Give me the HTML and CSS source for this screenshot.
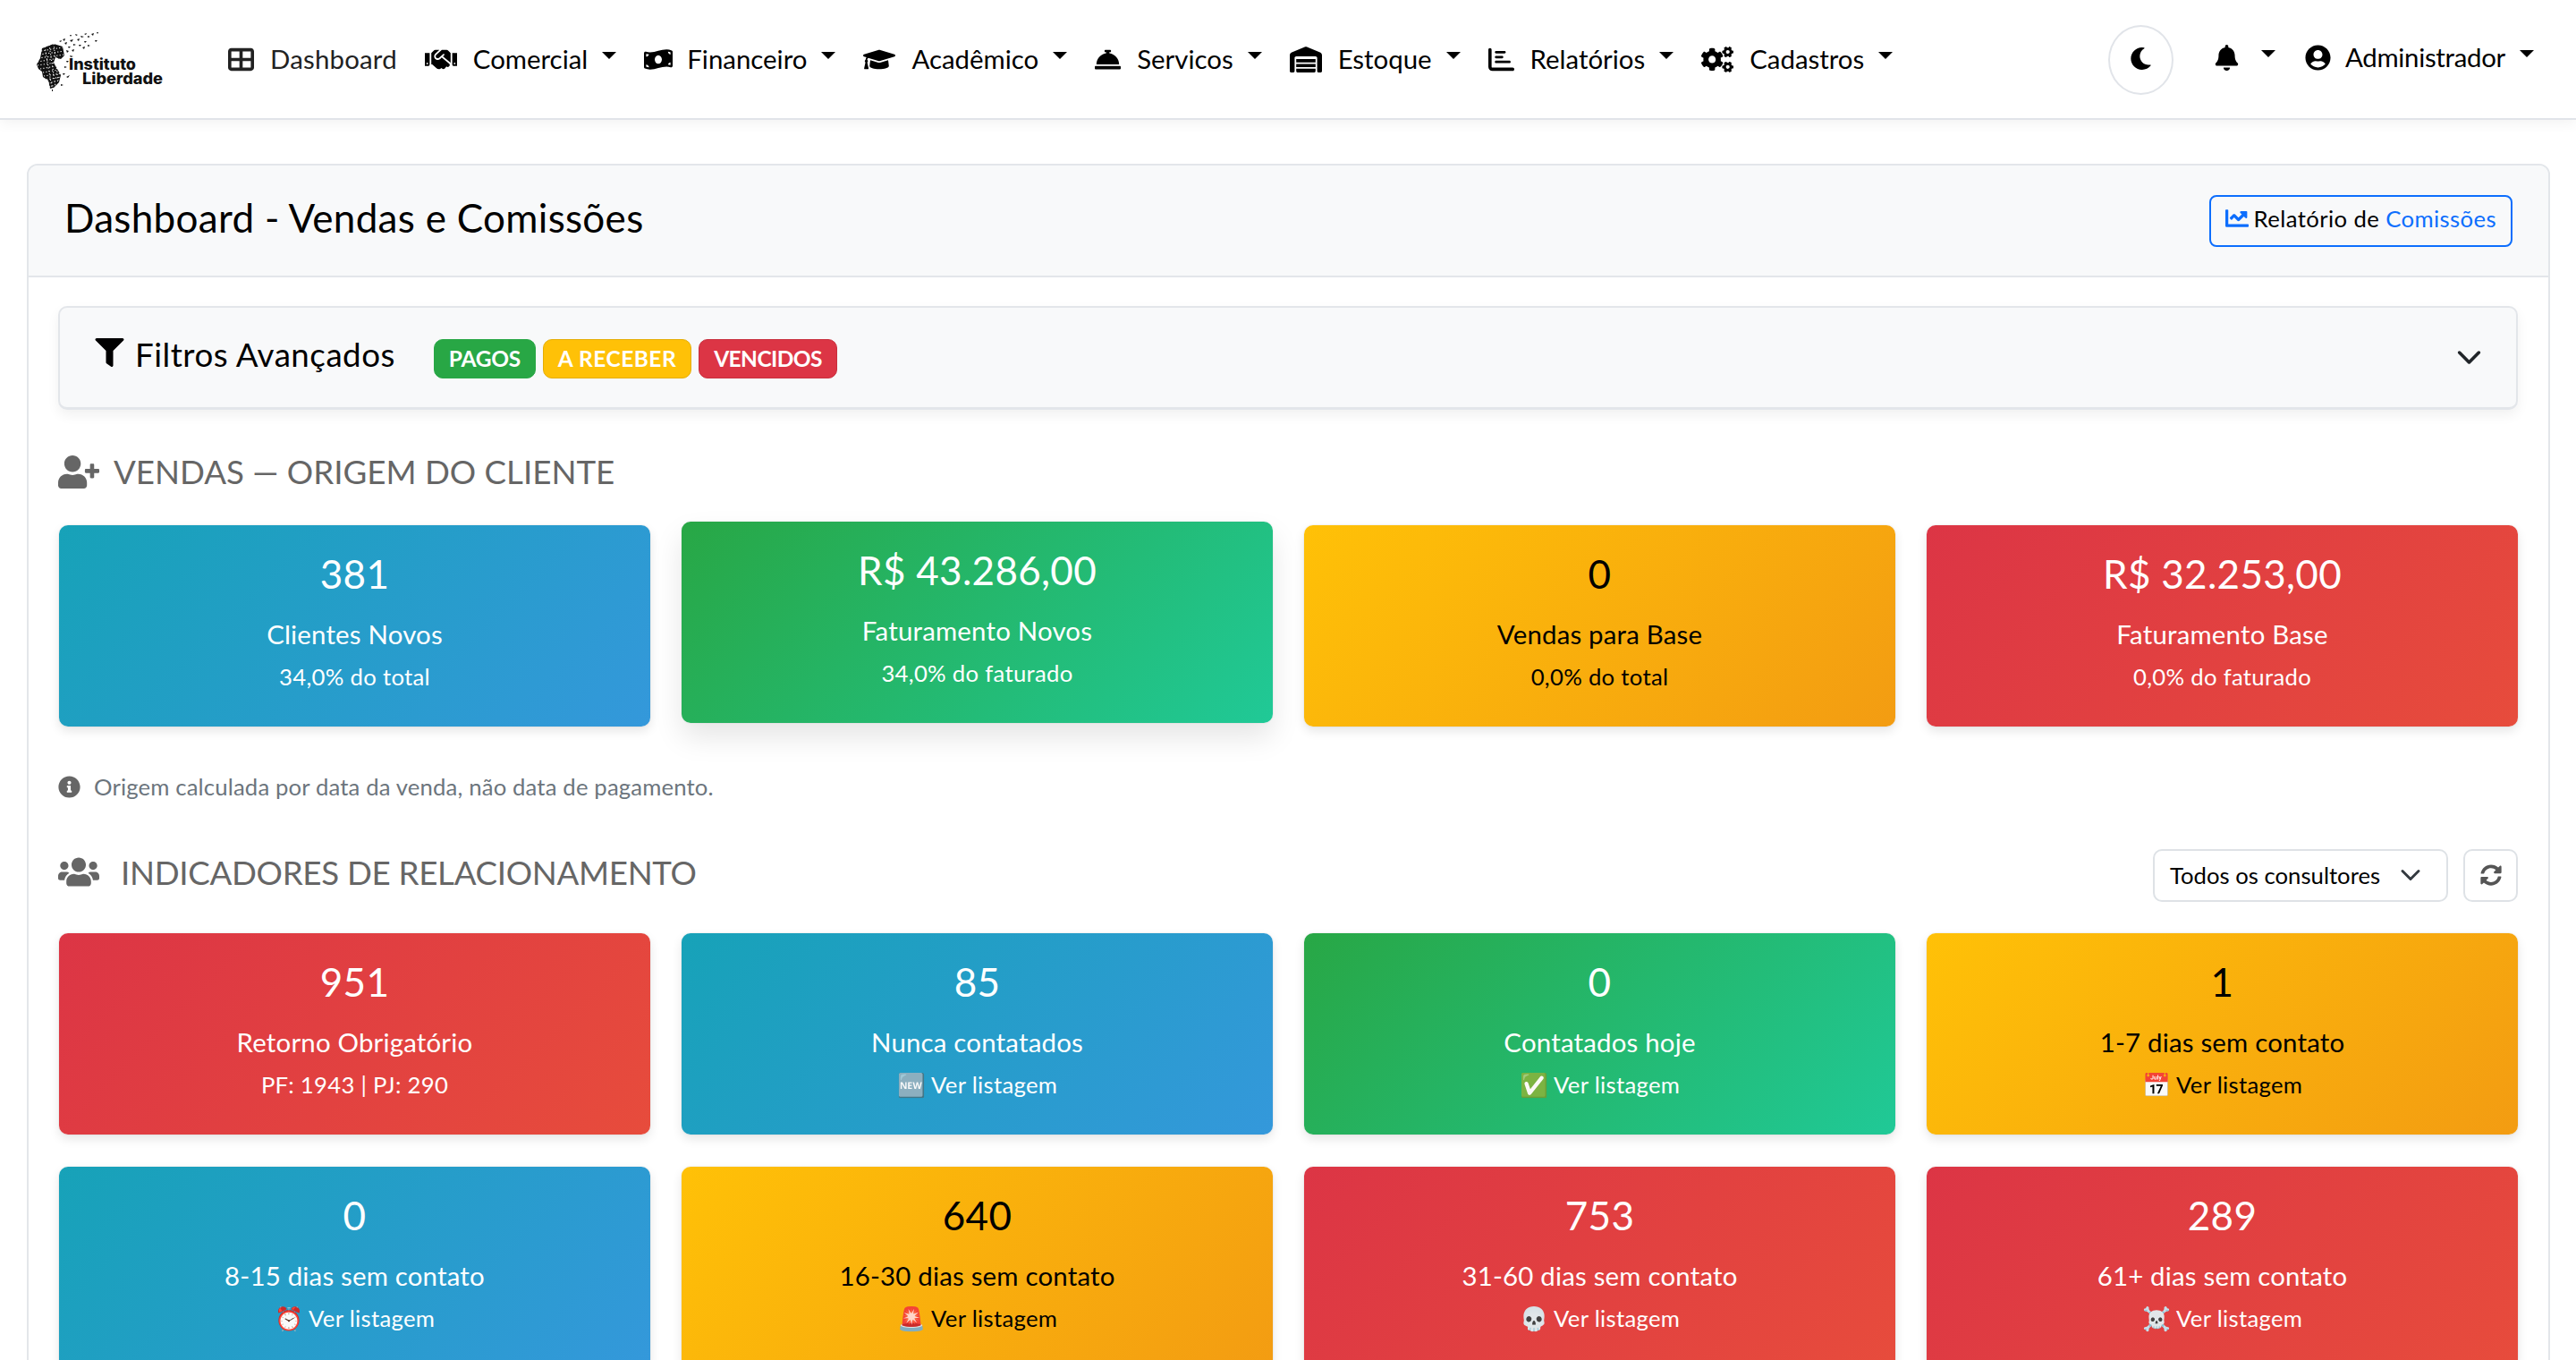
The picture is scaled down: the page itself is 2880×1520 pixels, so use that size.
FILE: index.html
```html
<!DOCTYPE html>
<html lang="pt-BR">
<head>
    <meta charset="UTF-8">
    <title>Dashboard - Vendas e Comissões</title>
    <link rel="stylesheet" href="styles.css">
</head>
<body>
    <!-- Navbar -->
    <nav class="navbar">
        <a class="brand">
            <svg class="brand-logo" viewBox="34 28 150 72">
                <path fill="#111" d="M45 52L58 47L68 50L70 60L66 64L60 62L58 68L62 75L66 82L64 90L58 96L54 97L52 88L46 84L45 78L41 75L39 70L43 63Z"/>
                <path fill="none" stroke="#fff" stroke-width="1.1" stroke-dasharray="1.2 2.2" d="M44 55L68 51M42 59L70 55M41 63L70 59M40 67L64 63M40 71L60 68M43 75L60 72M46 79L64 76M47 83L66 80M50 87L66 84M52 91L64 88M53 95L60 93M48 50L56 96M53 48L60 95M58 47L63 88"/>
                <path fill="#111" d="M70 46l3-1-1 3zM74 50l3 0-2 2zM68 42l3-1-1 3zM76 43l4-1-2 3zM80 47l3 1-3 1zM72 54l3 1-2 2zM78 54l3-1-1 3zM84 42l3-1-1 3zM88 38l4 1-3 1zM86 48l3 0-2 2zM92 44l3 0-2 2zM96 38l3 1-3 1zM100 36l3-1-1 3zM92 36l3-1-1 2zM104 43l3 0-2 2zM106 34l2 0-1 2zM82 36l3 1-2 1zM96 48l3 1-3 1zM90 51l3-1-1 3zM76 60l4 1-3 1zM72 66l3 0-2 2zM70 72l3 1-3 1zM68 80l3 0-2 2zM72 84l4-2-2 3zM66 92l3 1-3 1zM62 62l3 0-1 2zM56 98l1 0 0 3-1 0zM76 37l2 0-1 2zM64 44l3-1-1 2z"/>
                <text class="brand-text" x="75" y="76" textLength="75" lengthAdjust="spacingAndGlyphs">Instituto</text>
                <text class="brand-text" x="90" y="92" textLength="90" lengthAdjust="spacingAndGlyphs">Liberdade</text>
            </svg>
        </a>
        <ul class="nav-menu">
            <li class="nav-link nav-active">
                <svg class="nav-icon icon-grid" viewBox="0 0 512 512"><path d="M448 96V224H288V96H448zm0 192V416H288V288H448zM224 224H64V96H224V224zM64 288H224V416H64V288zM64 32C28.7 32 0 60.7 0 96V416c0 35.3 28.7 64 64 64H448c35.3 0 64-28.7 64-64V96c0-35.3-28.7-64-64-64H64z"/></svg>
                <span>Dashboard</span>
            </li>
            <li class="nav-link">
                <svg class="nav-icon icon-wide" viewBox="0 0 640 512"><path d="M434.7 64h-85.9c-8 0-15.7 3-21.6 8.4l-98.3 90c-.1.1-.2.3-.3.4-16.6 15.6-16.3 40.5-2.1 56 12.7 13.9 39.4 17.6 56.1 2.7.1-.1.3-.1.4-.2l79.9-73.2c6.5-5.9 16.7-5.5 22.6 1 6 6.5 5.5 16.6-1 22.6l-26.1 23.9L504 313.8c2.9 2.4 5.5 5 7.9 7.7V128l-54.6-54.6c-5.9-6-14.1-9.4-22.6-9.4zM544 128.2v223.9c0 17.7 14.3 32 32 32h64V128.2h-96zm48 223.9c-8.8 0-16-7.2-16-16s7.2-16 16-16 16 7.2 16 16-7.2 16-16 16zM0 384h64c17.7 0 32-14.3 32-32V128.2H0V384zm48-63.9c8.8 0 16 7.2 16 16s-7.2 16-16 16-16-7.2-16-16c0-8.9 7.2-16 16-16zm435.9 18.6L334.6 217.5l-30 27.5c-29.7 27.1-75.2 24.5-101.7-4.4-26.9-29.4-24.8-74.9 4.4-101.7L289.1 64h-83.8c-8.5 0-16.6 3.4-22.6 9.4L128 128v223.9h18.3l90.5 81.9c27.4 22.3 67.7 18.1 90-9.3l.2-.2 17.9 15.5c15.9 13 39.4 10.5 52.3-5.4l31.4-38.6 5.4 4.4c13.7 11.1 33.9 9.1 45-4.7l9.5-11.7c11.2-13.8 9.1-33.9-4.6-45.1z"/></svg>
                <span>Comercial</span><i class="caret"></i>
            </li>
            <li class="nav-link">
                <svg class="nav-icon icon-money" viewBox="0 0 640 512"><path d="M621.16 54.46C582.37 38.19 543.55 32 504.75 32c-123.17-.01-246.33 62.34-369.5 62.34-30.89 0-61.76-3.92-92.65-13.72-3.47-1.1-6.95-1.62-10.35-1.62C15.04 79 0 92.32 0 110.81v317.26c0 12.63 7.23 24.6 18.84 29.46C57.63 473.81 96.45 480 135.25 480c123.17 0 246.34-62.35 369.51-62.35 30.89 0 61.76 3.92 92.65 13.72 3.47 1.1 6.95 1.62 10.35 1.62 17.21 0 32.25-13.32 32.25-31.81V83.93c-.01-12.64-7.24-24.6-18.85-29.47zM48 132.22c20.12 5.04 41.12 7.57 62.72 8.93C104.84 170.54 79 192.69 48 192.69v-60.47zm0 285v-47.78c34.37 0 62.18 27.27 63.71 61.4-22.53-1.81-43.59-6.31-63.71-13.62zM320 352c-44.19 0-80-42.99-80-96 0-53.02 35.82-96 80-96s80 42.98 80 96c0 53.03-35.83 96-80 96zm272 27.78c-17.52-4.39-35.71-6.85-54.32-8.44 5.87-26.08 27.5-45.88 54.32-49.28v57.72zm0-236.11c-30.89-3.91-54.86-29.7-55.81-61.55 19.54 2.17 38.09 6.23 55.81 12.66v48.89z"/></svg>
                <span>Financeiro</span><i class="caret"></i>
            </li>
            <li class="nav-link">
                <svg class="nav-icon icon-wide" viewBox="0 0 640 512"><path d="M622.34 153.2L343.4 67.5c-15.2-4.67-31.6-4.67-46.79 0L17.66 153.2c-23.54 7.23-23.54 38.36 0 45.59l48.63 14.94c-10.67 13.19-17.23 29.28-17.88 46.9C38.78 266.15 32 276.11 32 288c0 10.78 5.68 19.85 13.86 25.65L20.33 428.53C18.11 438.52 25.71 448 35.94 448h56.11c10.24 0 17.84-9.48 15.62-19.47L82.14 313.65C90.32 307.85 96 298.78 96 288c0-11.57-6.47-21.25-15.66-26.87.76-15.02 8.44-28.3 20.69-36.72L296.6 284.5c9.06 2.78 26.44 6.25 46.79 0l278.95-85.7c23.55-7.24 23.55-38.36 0-45.6zM352.79 315.09c-28.53 8.76-52.84 3.92-65.59 0l-145.02-44.55L128 384c0 35.35 85.96 64 192 64s192-28.65 192-64l-14.18-113.47-145.03 44.56z"/></svg>
                <span>Acadêmico</span><i class="caret"></i>
            </li>
            <li class="nav-link">
                <svg class="nav-icon icon-grid" viewBox="0 0 512 512"><path d="M288 130.54V112h16c8.84 0 16-7.16 16-16V80c0-8.84-7.16-16-16-16h-96c-8.84 0-16 7.16-16 16v16c0 8.84 7.16 16 16 16h16v18.54C115.49 146.11 32 239.18 32 352h448c0-112.82-83.49-205.89-192-221.46zM496 384H16c-8.84 0-16 7.16-16 16v32c0 8.84 7.16 16 16 16h480c8.84 0 16-7.16 16-16v-32c0-8.84-7.16-16-16-16z"/></svg>
                <span>Servicos</span><i class="caret"></i>
            </li>
            <li class="nav-link">
                <svg class="nav-icon icon-wide" viewBox="0 0 640 512"><path d="M0 488V171.3c0-26.2 15.9-49.7 40.2-59.4L308.1 4.8c7.6-3.1 16.1-3.1 23.8 0l267.9 107.1c24.3 9.7 40.2 33.3 40.2 59.4V488c0 13.3-10.7 24-24 24h-48c-13.3 0-24-10.7-24-24V224c0-17.7-14.3-32-32-32H128c-17.7 0-32 14.3-32 32v264c0 13.3-10.7 24-24 24H24c-13.3 0-24-10.7-24-24zM488 512H152c-13.3 0-24-10.7-24-24v-48h384v48c0 13.3-10.7 24-24 24zM128 408v-64h384v64H128zm0-96v-64h384v64H128z"/></svg>
                <span>Estoque</span><i class="caret"></i>
            </li>
            <li class="nav-link">
                <svg class="nav-icon icon-grid" viewBox="0 0 512 512"><path d="M32 32c17.7 0 32 14.3 32 32v336c0 8.8 7.2 16 16 16h400c17.7 0 32 14.3 32 32s-14.300 32-32 32H80c-44.200 0-80-35.800-80-80V64c0-17.700 14.300-32 32-32zM128 112c0-13.300 10.700-24 24-24h168c13.300 0 24 10.700 24 24s-10.700 24-24 24H152c-13.300 0-24-10.700-24-24zm24 72h120c13.300 0 24 10.700 24 24s-10.700 24-24 24H152c-13.300 0-24-10.700-24-24s10.700-24 24-24zm0 96h264c13.300 0 24 10.700 24 24s-10.700 24-24 24H152c-13.300 0-24-10.700-24-24s10.700-24 24-24z"/></svg>
                <span>Relatórios</span><i class="caret"></i>
            </li>
            <li class="nav-link">
                <svg class="nav-icon icon-wide" viewBox="0 0 640 512"><path d="M512.100 191l-8.200 14.300c-3 5.300-9.400 7.500-15.100 5.400-11.800-4.400-22.600-10.700-32.100-18.600-4.600-3.800-5.800-10.500-2.800-15.700l8.200-14.300c-6.900-8-12.300-17.300-15.900-27.400h-16.500c-6 0-11.200-4.300-12.200-10.300-2-12-2.100-24.600 0-37.100 1-6 6.200-10.400 12.200-10.400h16.500c3.600-10.100 9-19.400 15.900-27.400l-8.200-14.300c-3-5.200-1.900-11.900 2.800-15.700 9.500-7.900 20.400-14.200 32.100-18.600 5.700-2.100 12.100.1 15.100 5.400l8.200 14.300c10.500-1.900 21.200-1.900 31.700 0L552 6.300c3-5.300 9.400-7.500 15.100-5.400 11.800 4.400 22.600 10.700 32.100 18.600 4.600 3.800 5.800 10.500 2.800 15.700l-8.200 14.300c6.900 8 12.300 17.300 15.900 27.400h16.500c6 0 11.200 4.300 12.200 10.300 2 12 2.100 24.600 0 37.100-1 6-6.200 10.400-12.200 10.400h-16.500c-3.600 10.100-9 19.400-15.900 27.400l8.200 14.300c3 5.200 1.900 11.900-2.800 15.700-9.500 7.900-20.400 14.200-32.100 18.600-5.700 2.100-12.100-.1-15.100-5.400l-8.200-14.300c-10.400 1.900-21.200 1.900-31.700 0zm-10.500-58.800c38.500 29.600 82.400-14.300 52.800-52.800-38.500-29.700-82.400 14.300-52.800 52.800zM386.300 286.100l33.700 16.800c10.100 5.800 14.500 18.100 10.500 29.100-8.900 24.200-26.400 46.400-42.600 65.800-7.400 8.900-20.200 11.100-30.300 5.300l-29.100-16.800c-16 13.700-34.600 24.600-54.900 31.700v33.600c0 11.600-8.300 21.600-19.700 23.600-24.600 4.200-50.400 4.400-75.900 0-11.500-2-20-11.900-20-23.600V418c-20.300-7.200-38.900-18-54.900-31.700L74 403c-10 5.800-22.900 3.600-30.300-5.300-16.200-19.400-33.300-41.600-42.200-65.700-4-10.900.4-23.200 10.500-29.100l33.300-16.800c-3.900-20.900-3.900-42.400 0-63.400L12 205.800c-10.100-5.800-14.600-18.100-10.500-29 8.900-24.200 26-46.400 42.200-65.800 7.400-8.900 20.200-11.100 30.300-5.300l29.100 16.800c16-13.700 34.600-24.600 54.900-31.700V57.100c0-11.500 8.200-21.500 19.600-23.500 24.600-4.200 50.500-4.400 76-.1 11.500 2 20 11.900 20 23.600v33.600c20.300 7.200 38.900 18 54.900 31.700l29.100-16.800c10-5.800 22.900-3.600 30.300 5.300 16.200 19.400 33.200 41.600 42.100 65.800 4 10.900.1 23.200-10 29.100l-33.700 16.800c3.900 21 3.900 42.500 0 63.500zm-117.600 21.100c59.200-77-28.700-164.900-105.700-105.700-59.200 77 28.700 164.900 105.700 105.700zm243.400 182.700l-8.200 14.300c-3 5.300-9.400 7.500-15.100 5.400-11.800-4.400-22.600-10.700-32.100-18.600-4.600-3.800-5.800-10.500-2.800-15.700l8.200-14.300c-6.900-8-12.300-17.300-15.900-27.400h-16.500c-6 0-11.200-4.300-12.200-10.300-2-12-2.100-24.600 0-37.100 1-6 6.200-10.400 12.200-10.400h16.500c3.600-10.100 9-19.400 15.900-27.400l-8.200-14.300c-3-5.200-1.900-11.900 2.800-15.700 9.500-7.900 20.400-14.200 32.100-18.600 5.700-2.100 12.100.1 15.100 5.400l8.200 14.300c10.500-1.900 21.200-1.900 31.700 0l8.200-14.300c3-5.300 9.400-7.500 15.100-5.400 11.800 4.400 22.600 10.700 32.100 18.600 4.600 3.800 5.800 10.500 2.800 15.700l-8.200 14.300c6.900 8 12.300 17.300 15.900 27.400h16.500c6 0 11.200 4.300 12.200 10.300 2 12 2.100 24.600 0 37.100-1 6-6.200 10.400-12.200 10.400h-16.500c-3.600 10.100-9 19.400-15.900 27.400l8.200 14.300c3 5.200 1.900 11.900-2.800 15.700-9.500 7.900-20.400 14.200-32.100 18.600-5.700 2.100-12.100-.1-15.100-5.400l-8.200-14.300c-10.400 1.900-21.200 1.900-31.700 0zM501.600 431c38.500 29.600 82.400-14.300 52.800-52.800-38.500-29.600-82.400 14.300-52.800 52.800z"/></svg>
                <span>Cadastros</span><i class="caret"></i>
            </li>
        </ul>
        <div class="nav-right">
            <button class="theme-btn">
                <svg class="moon-icon" viewBox="0 0 512 512"><path d="M283.211 512c78.962 0 151.079-35.925 198.857-94.792 7.068-8.708-.639-21.430-11.562-19.350-124.203 23.654-238.262-71.576-238.262-196.954 0-72.222 38.662-138.635 101.498-174.394 9.686-5.512 7.250-20.197-3.756-22.230A258.156 258.156 0 0 0 283.211 0c-141.309 0-256 114.511-256 256 0 141.309 114.511 256 256 256z"/></svg>
            </button>
            <div class="nav-link nav-bell">
                <svg class="bell-icon" viewBox="0 0 448 512"><path d="M224 512c35.320 0 63.970-28.650 63.970-64H160.030c0 35.350 28.650 64 63.970 64zm215.390-149.710c-19.320-20.760-55.470-51.990-55.470-154.290 0-77.700-54.480-139.900-127.940-155.160V32c0-17.670-14.320-32-31.980-32s-31.980 14.330-31.980 32v20.840C118.560 68.100 64.080 130.300 64.080 208c0 102.300-36.150 133.530-55.470 154.290-6 6.450-8.660 14.160-8.610 21.710.11 16.400 12.980 32 32.100 32h383.800c19.120 0 32-15.600 32.100-32 .05-7.550-2.610-15.270-8.610-21.710z"/></svg>
                <i class="caret"></i>
            </div>
            <div class="nav-link nav-user">
                <svg class="bell-icon" viewBox="0 0 496 512"><path d="M248 8C111 8 0 119 0 256s111 248 248 248 248-111 248-248S385 8 248 8zm0 96c48.600 0 88 39.400 88 88s-39.400 88-88 88-88-39.400-88-88 39.400-88 88-88zm0 344c-58.700 0-111.300-26.600-146.500-68.200 18.800-35.400 55.600-59.800 98.500-59.800 2.400 0 4.800.4 7.100 1.100 13 4.200 26.600 6.900 40.900 6.900 14.300 0 28-2.700 40.900-6.900 2.300-.7 4.700-1.100 7.100-1.100 42.900 0 79.700 24.400 98.500 59.800C359.300 421.400 306.700 448 248 448z"/></svg>
                <span class="user-name">Administrador</span><i class="caret"></i>
            </div>
        </div>
    </nav>

    <!-- Main Content -->
    <main class="main-content">
        <section class="panel">
            <header class="panel-header">
                <h1>Dashboard - Vendas e Comissões</h1>
                <a class="btn-report">
                    <svg class="report-icon" viewBox="0 0 512 512"><path d="M496 384H64V80c0-8.840-7.160-16-16-16H16C7.160 64 0 71.160 0 80v336c0 17.670 14.330 32 32 32h464c8.840 0 16-7.160 16-16v-32c0-8.840-7.160-16-16-16zM464 96H345.940c-21.380 0-32.090 25.850-16.970 40.970l32.400 32.400L288 242.750l-73.370-73.370c-12.500-12.500-32.760-12.500-45.250 0l-68.690 68.690c-6.250 6.250-6.250 16.380 0 22.630l22.620 22.620c6.250 6.250 16.380 6.250 22.630 0L192 237.250l73.370 73.370c12.500 12.500 32.760 12.500 45.250 0l96-96 32.400 32.400c15.120 15.120 40.970 4.410 40.970-16.970V112c.01-8.840-7.150-16-15.990-16z"/></svg>
                    <span>Relatório de <span class="text-blue">Comissões</span></span>
                </a>
            </header>
            <div class="panel-body">
                <!-- Filters -->
                <div class="filters">
                    <h2 class="filters-title">
                        <svg class="filter-icon" viewBox="0 0 512 512"><path d="M487.976 0H24.028C2.710 0-8.047 25.866 7.058 40.971L192 225.941V432c0 7.831 3.821 15.170 10.237 19.662l80 55.980C298.020 518.690 320 507.493 320 487.980V225.941l184.947-184.970C520.021 25.896 509.338 0 487.976 0z"/></svg>
                        Filtros Avançados
                    </h2>
                    <div class="badges">
                        <span class="badge badge-green">PAGOS</span>
                        <span class="badge badge-yellow">A RECEBER</span>
                        <span class="badge badge-red">VENCIDOS</span>
                    </div>
                    <svg class="filters-chevron" viewBox="0 0 16 16"><path fill="none" stroke="#212529" stroke-width="2" stroke-linecap="round" stroke-linejoin="round" d="M2 5l6 6 6-6"/></svg>
                </div>

                <!-- Vendas -->
                <h3 class="section-title">
                    <svg class="section-icon" viewBox="0 0 640 512"><path d="M624 208h-64v-64c0-8.800-7.200-16-16-16h-32c-8.800 0-16 7.200-16 16v64h-64c-8.800 0-16 7.200-16 16v32c0 8.800 7.200 16 16 16h64v64c0 8.800 7.200 16 16 16h32c8.800 0 16-7.200 16-16v-64h64c8.800 0 16-7.200 16-16v-32c0-8.800-7.200-16-16-16zm-400 48c70.700 0 128-57.300 128-128S294.700 0 224 0 96 57.300 96 128s57.300 128 128 128zm89.600 32h-16.700c-22.200 10.200-46.900 16-72.900 16s-50.600-5.800-72.900-16h-16.700C60.200 288 0 348.200 0 422.400V464c0 26.500 21.500 48 48 48h352c26.500 0 48-21.500 48-48v-41.600c0-74.200-60.200-134.400-134.400-134.400z"/></svg>
                    VENDAS — ORIGEM DO CLIENTE
                </h3>
                <div class="stats-grid">
                    <div class="stat-card grad-blue">
                        <div class="stat-value">381</div>
                        <div class="stat-label">Clientes Novos</div>
                        <div class="stat-sub">34,0% do total</div>
                    </div>
                    <div class="stat-card grad-green stat-hover">
                        <div class="stat-value">R$ 43.286,00</div>
                        <div class="stat-label">Faturamento Novos</div>
                        <div class="stat-sub">34,0% do faturado</div>
                    </div>
                    <div class="stat-card grad-yellow">
                        <div class="stat-value">0</div>
                        <div class="stat-label">Vendas para Base</div>
                        <div class="stat-sub">0,0% do total</div>
                    </div>
                    <div class="stat-card grad-red">
                        <div class="stat-value">R$ 32.253,00</div>
                        <div class="stat-label">Faturamento Base</div>
                        <div class="stat-sub">0,0% do faturado</div>
                    </div>
                </div>
                <p class="note">
                    <svg class="note-icon" viewBox="0 0 512 512"><path d="M256 8C119.043 8 8 119.083 8 256c0 136.997 111.043 248 248 248s248-111.003 248-248C504 119.083 392.957 8 256 8zm0 110c23.196 0 42 18.804 42 42s-18.804 42-42 42-42-18.804-42-42 18.804-42 42-42zm56 254c0 6.627-5.373 12-12 12h-88c-6.627 0-12-5.373-12-12v-24c0-6.627 5.373-12 12-12h12v-64h-12c-6.627 0-12-5.373-12-12v-24c0-6.627 5.373-12 12-12h64c6.627 0 12 5.373 12 12v100h12c6.627 0 12 5.373 12 12v24z"/></svg>
                    Origem calculada por data da venda, não data de pagamento.
                </p>

                <!-- Relacionamento -->
                <div class="section-row">
                    <h3 class="section-title section-title-row">
                        <svg class="section-icon" viewBox="0 0 640 512"><path d="M96 224c35.300 0 64-28.700 64-64s-28.700-64-64-64-64 28.700-64 64 28.700 64 64 64zm448 0c35.300 0 64-28.700 64-64s-28.700-64-64-64-64 28.700-64 64 28.700 64 64 64zm32 32h-64c-17.600 0-33.500 7.100-45.100 18.600 40.300 22.100 68.900 62 75.100 109.400h66c17.700 0 32-14.300 32-32v-32c0-35.300-28.700-64-64-64zm-256 0c61.900 0 112-50.100 112-112S381.900 32 320 32 208 82.100 208 144s50.100 112 112 112zm76.800 32h-8.300c-20.800 10-43.900 16-68.500 16s-47.600-6-68.500-16h-8.300C179.600 288 128 339.600 128 403.200V432c0 26.500 21.500 48 48 48h288c26.500 0 48-21.500 48-48v-28.800c0-63.600-51.600-115.200-115.200-115.200zm-223.700-13.400C161.500 263.100 145.600 256 128 256H64c-35.300 0-64 28.700-64 64v32c0 17.700 14.300 32 32 32h65.900c6.300-47.400 34.900-87.300 75.200-109.400z"/></svg>
                        INDICADORES DE RELACIONAMENTO
                    </h3>
                    <div class="section-controls">
                        <div class="select-box">
                            <span>Todos os consultores</span>
                            <svg class="select-chevron" viewBox="0 0 16 16"><path fill="none" stroke="#343a40" stroke-width="2" stroke-linecap="round" stroke-linejoin="round" d="M2 5l6 6 6-6"/></svg>
                        </div>
                        <button class="btn-refresh">
                            <svg class="refresh-icon" viewBox="0 0 512 512"><path d="M370.720 133.280C339.458 104.008 298.888 87.962 255.848 88c-77.458.068-144.328 53.178-162.791 126.850-1.344 5.363-6.122 9.150-11.651 9.150H24.103c-7.498 0-13.194-6.807-11.807-14.176C33.933 94.924 134.813 8 256 8c66.448 0 126.791 26.136 171.315 68.685L463.030 40.970C478.149 25.851 504 36.559 504 57.941V192c0 13.255-10.745 24-24 24H345.941c-21.382 0-32.090-25.851-16.971-40.971l41.750-41.749zM32 296h134.059c21.382 0 32.090 25.851 16.971 40.971l-41.750 41.750c31.262 29.273 71.835 45.319 114.876 45.280 77.418-.07 144.315-53.144 162.787-126.849 1.344-5.363 6.122-9.150 11.651-9.150h57.304c7.498 0 13.194 6.807 11.807 14.176C478.067 417.076 377.187 504 256 504c-66.448 0-126.791-26.136-171.315-68.685L48.970 471.030C33.851 486.149 8 475.441 8 454.059V320c0-13.255 10.745-24 24-24z"/></svg>
                        </button>
                    </div>
                </div>
                <div class="stats-grid stats-grid-rel">
                    <div class="stat-card grad-red">
                        <div class="stat-value">951</div>
                        <div class="stat-label">Retorno Obrigatório</div>
                        <div class="stat-sub">PF: 1943 | PJ: 290</div>
                    </div>
                    <div class="stat-card grad-blue">
                        <div class="stat-value">85</div>
                        <div class="stat-label">Nunca contatados</div>
                        <div class="stat-sub">🆕 Ver listagem</div>
                    </div>
                    <div class="stat-card grad-green">
                        <div class="stat-value">0</div>
                        <div class="stat-label">Contatados hoje</div>
                        <div class="stat-sub">✅ Ver listagem</div>
                    </div>
                    <div class="stat-card grad-yellow">
                        <div class="stat-value">1</div>
                        <div class="stat-label">1-7 dias sem contato</div>
                        <div class="stat-sub">📅 Ver listagem</div>
                    </div>
                    <div class="stat-card grad-blue">
                        <div class="stat-value">0</div>
                        <div class="stat-label">8-15 dias sem contato</div>
                        <div class="stat-sub">⏰ Ver listagem</div>
                    </div>
                    <div class="stat-card grad-yellow">
                        <div class="stat-value">640</div>
                        <div class="stat-label">16-30 dias sem contato</div>
                        <div class="stat-sub">🚨 Ver listagem</div>
                    </div>
                    <div class="stat-card grad-red">
                        <div class="stat-value">753</div>
                        <div class="stat-label">31-60 dias sem contato</div>
                        <div class="stat-sub">💀 Ver listagem</div>
                    </div>
                    <div class="stat-card grad-red">
                        <div class="stat-value">289</div>
                        <div class="stat-label">61+ dias sem contato</div>
                        <div class="stat-sub">☠️ Ver listagem</div>
                    </div>
                </div>
            </div>
        </section>
    </main>
</body>
</html>
```

FILE: styles.css
```css
html, body {
    height: 1520px;
    overflow: hidden;
}

body {
    font-family: Lato, "Noto Sans", sans-serif;
    margin: 0;
    background-color: #fff;
    color: #000;
}

/* Navbar */
.navbar {
    display: flex;
    align-items: center;
    height: 132px;
    padding: 0 36px;
    background: #fff;
    border-bottom: 2px solid #e1e4e9;
    box-shadow: 0 4px 14px rgba(0, 0, 0, 0.05);
}

.brand {
    display: block;
    width: 150px;
    height: 72px;
    margin-right: 69px;
}

.brand-logo {
    display: block;
    width: 150px;
    height: 72px;
}

.brand-text {
    font-family: Inter, sans-serif;
    font-weight: 800;
    font-size: 17px;
    fill: #111;
}

.nav-menu {
    display: flex;
    align-items: center;
    list-style: none;
    margin: 0;
    padding: 0;
    gap: 31px;
}

.nav-link {
    display: flex;
    align-items: center;
    font-size: 29.4px;
    line-height: 44px;
    white-space: nowrap;
}

.nav-active {
    color: #222;
    letter-spacing: 0.2px;
}

.nav-icon {
    fill: currentColor;
    flex: none;
    margin-right: 18px;
}

.icon-grid {
    width: 29px;
    height: 29px;
}

.icon-wide {
    width: 36px;
    height: 29px;
}

.icon-money {
    width: 32px;
    height: 29px;
    margin-right: 16px;
}

.caret {
    display: inline-block;
    width: 0;
    height: 0;
    margin-left: 16px;
    margin-top: -8px;
    border-top: 8.8px solid currentColor;
    border-left: 8.4px solid transparent;
    border-right: 8.4px solid transparent;
}

.nav-right {
    display: flex;
    align-items: center;
    margin-left: auto;
    margin-right: 11px;
}

.theme-btn {
    width: 73px;
    height: 78px;
    padding: 0;
    margin-right: 45px;
    margin-top: 2px;
    border: 2px solid #e1e4e9;
    border-radius: 50%;
    background: #fff;
}

.moon-icon {
    display: block;
    width: 25px;
    height: 25px;
    margin: -4px auto 0;
    fill: #000;
}

.nav-bell {
    margin-right: 33px;
    margin-top: -4px;
}

.nav-user {
    margin-top: -4px;
}

.user-name {
    letter-spacing: -0.3px;
}

.bell-icon {
    width: 29px;
    height: 29px;
    fill: #000;
    margin-right: 16px;
}

.nav-bell .bell-icon {
    margin-right: 8px;
}

/* Main panel */
.main-content {
    padding: 49px 29px 0 30px;
}

.panel {
    border: 2px solid #e3e6ea;
    border-radius: 12px;
    background: #fff;
}

.panel-header {
    display: flex;
    align-items: center;
    justify-content: space-between;
    height: 123px;
    padding: 0 40px;
    background: #f8f9fa;
    border-bottom: 2px solid #e3e6ea;
    border-radius: 10px 10px 0 0;
}

.panel-header h1 {
    margin: -7px 0 0;
    font-size: 44px;
    font-weight: 400;
    letter-spacing: 0.3px;
}

.btn-report {
    display: flex;
    align-items: center;
    height: 58px;
    box-sizing: border-box;
    padding: 0 16px 6px;
    border: 2px solid #0d6efd;
    border-radius: 8px;
    font-size: 25.7px;
    letter-spacing: 0.4px;
    white-space: nowrap;
}

.report-icon {
    width: 26px;
    height: 26px;
    fill: #0d6efd;
    margin-right: 6px;
}

.text-blue {
    color: #0d6efd;
}

.panel-body {
    padding: 32px 34px 0 33px;
}

/* Filters */
.filters {
    display: flex;
    align-items: center;
    height: 116px;
    box-sizing: border-box;
    padding: 0 40px 0 37px;
    background: #f8f9fa;
    border: 2px solid #e3e6ea;
    border-bottom-width: 3px;
    border-radius: 10px;
    box-shadow: 0 6px 14px rgba(0, 0, 0, 0.06);
}

.filters-title {
    display: flex;
    align-items: center;
    margin: -8px 43px 0 0;
    font-size: 36.7px;
    font-weight: 400;
    letter-spacing: 0.5px;
}

.filter-icon {
    width: 37px;
    height: 32px;
    margin-right: 10px;
    margin-top: -4px;
}

.badges {
    display: flex;
    gap: 8px;
    margin-top: 2px;
}

.badge {
    height: 44px;
    box-sizing: border-box;
    padding: 0 16px;
    border: 1px solid;
    border-radius: 10px;
    color: #fff;
    font-size: 24.5px;
    font-weight: 700;
    letter-spacing: -0.3px;
    line-height: 42px;
}

.badge-green {
    background: #28a745;
    border-color: #28a745;
}

.badge-yellow {
    background: #ffc107;
    border-color: #e5ad06;
    letter-spacing: 0.5px;
}

.badge-red {
    background: #dc3545;
    border-color: #c82f3d;
    letter-spacing: -0.6px;
}

.filters-chevron {
    width: 29px;
    height: 29px;
    margin-left: auto;
    margin-right: -2px;
}

/* Section headings */
.section-title {
    display: flex;
    align-items: center;
    margin: 47px 0 38px;
    color: #666;
    font-size: 36.7px;
    font-weight: 400;
    line-height: 44px;
}

.section-icon {
    width: 46px;
    height: 37px;
    margin-right: 16px;
    fill: #666;
    flex: none;
}

.section-row {
    display: flex;
    align-items: center;
    justify-content: space-between;
    height: 60px;
    margin-top: 50px;
    margin-bottom: 35px;
}

.section-title-row {
    margin: -7px 0 0;
    letter-spacing: -0.3px;
}

.section-title-row .section-icon {
    margin-right: 24px;
}

.section-controls {
    display: flex;
    gap: 17px;
}

.select-box {
    display: flex;
    align-items: center;
    justify-content: space-between;
    width: 330px;
    height: 59px;
    box-sizing: border-box;
    padding: 0 28px 0 17px;
    border: 2px solid #dee2e6;
    border-radius: 10px;
    font-size: 25.7px;
}

.select-chevron {
    width: 24px;
    height: 24px;
}

.btn-refresh {
    width: 61px;
    height: 59px;
    padding: 0;
    border: 2px solid #dee2e6;
    border-radius: 10px;
    background: #fff;
}

.refresh-icon {
    display: block;
    width: 24px;
    height: 24px;
    margin: 0 auto;
    fill: #555;
}

/* Stat cards */
.stats-grid {
    display: grid;
    grid-template-columns: repeat(4, 1fr);
    gap: 36px 35px;
    margin-left: 1px;
}

.stat-card {
    height: 225px;
    box-sizing: border-box;
    padding-top: 28px;
    border-radius: 10px;
    color: #fff;
    text-align: center;
    box-shadow: 0 0 0 1px rgba(0, 0, 0, 0.03), 0 5px 12px rgba(0, 0, 0, 0.1);
}

.stat-hover {
    transform: translateY(-4px);
    box-shadow: 0 0 0 1px rgba(0, 0, 0, 0.03), 0 16px 32px rgba(0, 0, 0, 0.1);
}

.stat-value {
    font-size: 44px;
    line-height: 53px;
    letter-spacing: 0.3px;
}

.stat-label {
    margin-top: 19px;
    font-size: 29.4px;
    line-height: 44px;
    letter-spacing: 0.2px;
}

.stat-sub {
    margin-top: 6px;
    font-size: 25.7px;
    line-height: 38px;
    letter-spacing: 0.3px;
}

.grad-blue {
    background: linear-gradient(135deg, #17a2b8, #3498db);
}

.grad-green {
    background: linear-gradient(135deg, #28a745, #20c997);
}

.grad-yellow {
    background: linear-gradient(135deg, #ffc107, #f39c12);
    color: #000;
}

.grad-red {
    background: linear-gradient(135deg, #dc3545, #e74c3c);
}

/* Note under the cards */
.note {
    display: flex;
    align-items: center;
    margin: 48px 0 0;
    color: #6c757d;
    font-size: 25.7px;
    line-height: 38px;
    letter-spacing: 0.15px;
}

.note-icon {
    width: 25px;
    height: 25px;
    margin-right: 15px;
    fill: #666;
}
```
